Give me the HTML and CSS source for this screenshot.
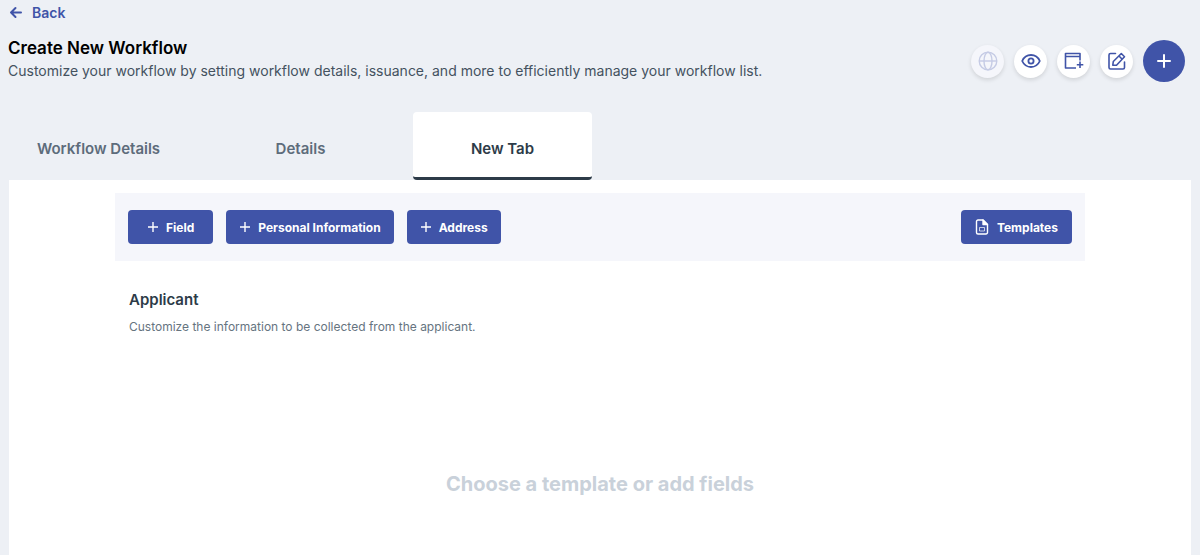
FILE: index.html
```html
<!DOCTYPE html>
<html lang="en">

<head>
    <meta charset="UTF-8">
    <meta name="viewport" content="width=device-width, initial-scale=1.0">
    <title>Create New Workflow</title>
    <link rel="stylesheet" href="styles.css">
</head>

<body>
    <header class="page-header">
        <a class="back" href="#">
            <svg width="14" height="14" viewBox="0 0 14 14" fill="none" stroke="currentColor" stroke-width="2" stroke-linecap="round" stroke-linejoin="round">
                <path d="M13 6.500H3M7.500 2L3 6.500l4.500 4.500" />
            </svg>
            Back
        </a>
        <div class="title-row">
            <div class="title">
                <h1>Create New Workflow</h1>
                <p>Customize your workflow by setting workflow details, issuance, and more to efficiently manage your workflow list.</p>
            </div>
            <div class="actions">
                <button class="icon-button" type="button" aria-label="Publish" disabled>
                    <svg width="20" height="20" viewBox="0 0 20 20" fill="none" stroke="currentColor" stroke-width="1.4">
                        <circle cx="10" cy="10" r="8.8" />
                        <ellipse cx="10" cy="10" rx="4" ry="8.8" />
                        <path d="M1.2 10h17.6" />
                    </svg>
                </button>
                <button class="icon-button" type="button" aria-label="Preview">
                    <svg width="20" height="20" viewBox="0 0 20 20" fill="none" stroke="currentColor" stroke-width="1.8">
                        <path d="M1.200 10C3 6 6.200 4 10 4s7 2 8.800 6c-1.800 4-5 6-8.800 6s-7-2-8.800-6z" stroke-linejoin="round" />
                        <circle cx="10" cy="10" r="2.600" />
                    </svg>
                </button>
                <button class="icon-button" type="button" aria-label="Add tab">
                    <svg width="20" height="20" viewBox="0 0 20 20" fill="none" stroke="currentColor" stroke-width="1.600">
                        <path d="M12 17H1.500V2.500h14.500V9.500M1.500 5.500h14.500" stroke-linejoin="round" />
                        <path d="M16 10.500v6.500M12.800 13.700h6.500" />
                    </svg>
                </button>
                <button class="icon-button" type="button" aria-label="Edit">
                    <svg width="20" height="20" viewBox="0 0 20 20" fill="none" stroke="currentColor" stroke-width="1.600" stroke-linecap="round" stroke-linejoin="round">
                        <path d="M8.500 2.500H3.500a1.500 1.500 0 0 0-1.500 1.500V16.500a1.500 1.500 0 0 0 1.500 1.500h12.500a1.500 1.500 0 0 0 1.500-1.500v-5.500" />
                        <path d="M5.800 14.200l.5-3.700 8-8 3.200 3.200-8 8.500zM12 5l3.200 3.200" />
                    </svg>
                </button>
                <button class="icon-button add" type="button" aria-label="Add">
                    <svg width="16" height="16" viewBox="0 0 16 16" fill="none" stroke="currentColor" stroke-width="2" stroke-linecap="round">
                        <path d="M8 2v12M2 8h12" />
                    </svg>
                </button>
            </div>
        </div>
    </header>

    <nav class="tabs" role="tablist">
        <button class="tab" type="button" role="tab" aria-selected="false">Workflow Details</button>
        <button class="tab" type="button" role="tab" aria-selected="false">Details</button>
        <button class="tab active" type="button" role="tab" aria-selected="true">New Tab</button>
    </nav>

    <main class="panel">
        <div class="toolbar">
            <button class="button wide" type="button">
                <svg width="12" height="12" viewBox="0 0 12 12" stroke="currentColor" stroke-width="1.400">
                    <path d="M6 1v10M1 6h10" />
                </svg>
                Field
            </button>
            <button class="button" type="button">
                <svg width="12" height="12" viewBox="0 0 12 12" stroke="currentColor" stroke-width="1.400">
                    <path d="M6 1v10M1 6h10" />
                </svg>
                Personal Information
            </button>
            <button class="button" type="button">
                <svg width="12" height="12" viewBox="0 0 12 12" stroke="currentColor" stroke-width="1.400">
                    <path d="M6 1v10M1 6h10" />
                </svg>
                Address
            </button>
            <button class="button templates" type="button">
                <svg width="14" height="16" viewBox="0 0 14 16" fill="none" stroke="currentColor" stroke-width="1.400" stroke-linejoin="round">
                    <path d="M8 1H3a1.500 1.500 0 0 0-1.500 1.500v11A1.500 1.500 0 0 0 3 15h8a1.500 1.500 0 0 0 1.500-1.500v-8z" />
                    <path d="M8 1v4.500h4.500z" fill="currentColor" />
                    <path d="M4.500 8.500h5v3.500h-5z" stroke-width="1" opacity="0.7" />
                </svg>
                Templates
            </button>
        </div>

        <section class="applicant">
            <h2>Applicant</h2>
            <p>Customize the information to be collected from the applicant.</p>
        </section>

        <p class="empty">Choose a template or add fields</p>
    </main>
</body>

</html>
```

FILE: styles.css
```css
* {
    margin: 0;
    padding: 0;
    box-sizing: border-box;
}

body {
    font-family: Inter, sans-serif;
    background-color: #edf0f5;
    color: #2d3b48;
    display: flex;
    flex-direction: column;
    min-height: 100vh;
}

button {
    font-family: inherit;
    border: none;
    cursor: pointer;
}

svg {
    display: block;
    flex-shrink: 0;
}

.page-header {
    padding: 4px 15px 0 8px;
}

.back {
    display: inline-flex;
    align-items: center;
    gap: 10px;
    color: #4054a8;
    font-size: 14px;
    line-height: 18px;
    font-weight: 600;
    text-decoration: none;
}

.title-row {
    display: flex;
    justify-content: space-between;
    align-items: flex-end;
    margin-top: 12px;
}

h1 {
    color: #000000;
    font-size: 17px;
    line-height: 24px;
    font-weight: 600;
}

.title p {
    color: #44525f;
    font-size: 14px;
    line-height: 22px;
}

.actions {
    display: flex;
    align-items: center;
    gap: 10px;
}

.icon-button {
    display: flex;
    justify-content: center;
    align-items: center;
    width: 33px;
    height: 33px;
    border-radius: 50%;
    background-color: #ffffff;
    color: #4054a8;
    box-shadow: 0 2px 4px rgba(0, 0, 0, 0.12);
}

.icon-button:disabled {
    background-color: #f5f6fb;
    color: #c5cbe5;
    cursor: default;
}

.icon-button.add {
    width: 42px;
    height: 42px;
    background-color: #4054a8;
    color: #ffffff;
    box-shadow: none;
}

.tabs {
    display: flex;
    gap: 23px;
    padding: 0 9px;
    margin-top: 30px;
}

.tab {
    width: 179px;
    height: 68px;
    padding-top: 8px;
    border-bottom: 3px solid transparent;
    border-radius: 4px;
    background-color: transparent;
    color: #5d6c7b;
    font-size: 15px;
    font-weight: 600;
}

.tab.active {
    background-color: #ffffff;
    border-bottom-color: #2d3b48;
    color: #2d3b48;
}

.panel {
    flex: 1;
    margin: 0 9px;
    padding: 13px 106px;
    background-color: #ffffff;
}

.toolbar {
    display: flex;
    gap: 13px;
    padding: 17px 13px;
    background-color: #f5f6fb;
}

.button {
    display: flex;
    align-items: center;
    gap: 7px;
    height: 34px;
    padding: 0 13px;
    border-radius: 4px;
    background-color: #4054a8;
    color: #ffffff;
    font-size: 12px;
    font-weight: 700;
}

.button.wide {
    padding: 0 19px;
}

.button.templates {
    gap: 8px;
    padding: 0 14px;
    margin-left: auto;
}

.applicant {
    padding: 29px 14px 0;
}

h2 {
    font-size: 15px;
    line-height: 20px;
    font-weight: 600;
}

.applicant p {
    margin-top: 8px;
    color: #66747f;
    font-size: 12px;
    line-height: 18px;
}

.empty {
    margin-top: 134px;
    color: #c9d1da;
    font-size: 20px;
    line-height: 28px;
    font-weight: 700;
    text-align: center;
}
```
